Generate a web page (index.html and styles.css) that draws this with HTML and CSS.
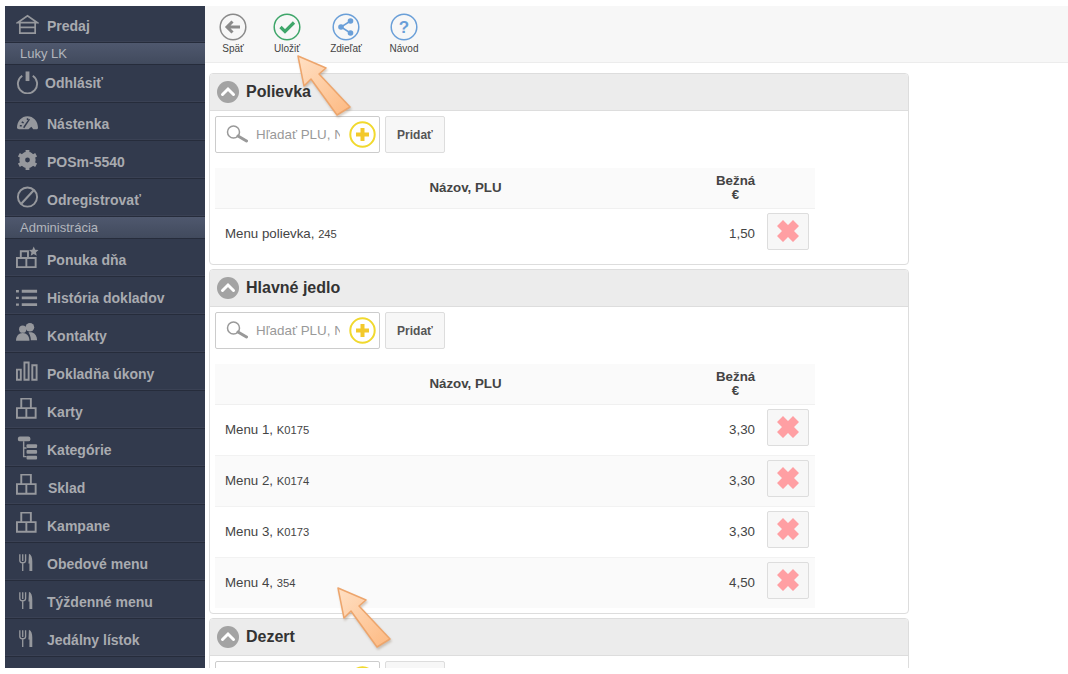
FILE: index.html
```html
<!DOCTYPE html>
<html lang="sk">
<head>
<meta charset="utf-8">
<title>Obedové menu</title>
<link rel="stylesheet" href="styles.css">
</head>
<body>
<svg class="defs" width="0" height="0" aria-hidden="true">
  <defs>
    <symbol id="i-blocks" viewBox="0 0 24 24"><path d="M5.500 0h10v10h-10zM1 10h9.800v10H1zM10.800 10h9.700v10h-9.700z" fill="none" stroke="currentColor" stroke-width="2"/></symbol>
    <symbol id="i-fork" viewBox="0 0 24 24"><path d="M4 4v7M7 4v7M10 4v7M4 10.500c0 2 1.500 2.500 3 2.500s3-.5 3-2.500M7 12v9.500" fill="none" stroke="currentColor" stroke-width="1.400"/><path d="M13.500 3.500c2.500 1 3.500 4 3.500 8v10h-3v-8h-1z" fill="currentColor"/></symbol>
    <symbol id="i-x" viewBox="0 0 24 24"><path d="M7 1 12 6l5-5 6 6-5 5 5 5-6 6-5-5-5 5-6-6 5-5-5-5z" fill="#ff9fa3"/></symbol>
    <symbol id="i-search" viewBox="0 0 22 18"><circle cx="7.500" cy="7" r="6" fill="none" stroke="#999" stroke-width="1.500"/><path d="M12 11 20.500 16" stroke="#999" stroke-width="3" stroke-linecap="round"/></symbol>
    <symbol id="i-plus" viewBox="0 0 27 27"><circle cx="13.500" cy="13.500" r="12.200" fill="#fff" stroke="#f1d92e" stroke-width="2"/><path d="M13.500 7v13M7 13.500h13" stroke="#f3c92b" stroke-width="4"/></symbol>
    <symbol id="i-up" viewBox="0 0 22 22"><circle cx="11" cy="11" r="11" fill="#a3a3a3"/><path d="M5.500 13.500 11 8l5.500 5.500" fill="none" stroke="#fff" stroke-width="3" stroke-linecap="round"/></symbol>
    <linearGradient id="arrow-fill" x1="0" y1="0" x2="1" y2="1">
      <stop offset="0" stop-color="#ffe0c4"/>
      <stop offset="1" stop-color="#fdb981"/>
    </linearGradient>
    <symbol id="callout-arrow" viewBox="0 0 60 64"><path d="M1 1 29 13l-7 6 31 33-13 8L14 24l-7 7z" fill="url(#arrow-fill)" stroke="#eda56c" stroke-width="1.500" stroke-linejoin="round"/></symbol>
  </defs>
</svg>

<div class="frame">
  <nav class="sidebar">
    <a class="nav-item nav-first" href="#"><svg class="nav-icon" viewBox="0 0 24 24"><path d="M2 10.500 12 3.500l10 7zM4 10.500v11h16v-11M4 15.500h16" fill="none" stroke="currentColor" stroke-width="1.800"/></svg><span>Predaj</span></a>
    <div class="nav-group">Luky LK</div>
    <a class="nav-item nav-tight" href="#"><svg class="nav-icon" viewBox="0 0 24 24"><path d="M6.500 5.500a10 10 0 1 0 11 0" fill="none" stroke="currentColor" stroke-width="2"/><path d="M12 1v10" stroke="currentColor" stroke-width="4"/></svg><span>Odhlásiť</span></a>
    <a class="nav-item" href="#"><svg class="nav-icon" viewBox="0 0 24 24"><path d="M1 18.500C1 11 6 6 12 6s11 5 11 12.500l-1 1h-4L16 17l-3 2.500H3z" fill="currentColor"/><path d="M8 18 14 9" stroke="#323a4d" stroke-width="1.500"/><path d="M6 12l2 1M12 8v2M4 16h2" stroke="#323a4d" stroke-width="1.500"/></svg><span>Nástenka</span></a>
    <a class="nav-item" href="#"><svg class="nav-icon" viewBox="0 0 24 24"><path d="M12 6.500a5.500 5.500 0 1 1 0 11 5.500 5.500 0 0 1 0-11z" fill="none" stroke="currentColor" stroke-width="6"/><path d="M12 1.500v4M12 18.500v4M3 6.500l3.500 2M17.500 15.500l3.500 2M3 17.500l3.500-2M17.500 8.500l3.500-2" stroke="currentColor" stroke-width="4"/></svg><span>POSm-5540</span></a>
    <a class="nav-item" href="#"><svg class="nav-icon" viewBox="0 0 24 24"><circle cx="12" cy="11" r="10" fill="none" stroke="currentColor" stroke-width="2"/><path d="M5.500 18 18.500 4" stroke="currentColor" stroke-width="2.200"/></svg><span>Odregistrovať</span></a>
    <div class="nav-group">Administrácia</div>
    <a class="nav-item" href="#"><svg class="nav-icon" viewBox="0 0 24 24"><path d="M5 5h7.500v7H5zM1 12h9.800v9.500H1zM10.800 12h9.700v9.500h-9.700z" fill="none" stroke="currentColor" stroke-width="2"/><path d="m18.500 0 1.500 3.300 3.500.4-2.600 2.400.7 3.500-3.100-1.700-3.100 1.700.7-3.500-2.600-2.400 3.500-.4z" fill="currentColor"/></svg><span>Ponuka dňa</span></a>
    <a class="nav-item" href="#"><svg class="nav-icon" viewBox="0 0 24 24"><path d="M0 7h3M0 14h3M0 21h3" stroke="currentColor" stroke-width="2.500"/><path d="M6 7h16M6 14h16M6 21h16" stroke="currentColor" stroke-width="3"/></svg><span>História dokladov</span></a>
    <a class="nav-item" href="#"><svg class="nav-icon" viewBox="0 0 24 24"><circle cx="14.500" cy="5" r="4.500" fill="currentColor"/><circle cx="7" cy="7" r="3.800" fill="currentColor"/><path d="M0 19c0-5 3-8 7-8s7 3 7 8z" fill="currentColor"/><path d="M13 10.500c1-.5 3-.5 4 0 3 1 5 4 5 8h-6.500c0-3-1-6-2.500-8z" fill="currentColor"/></svg><span>Kontakty</span></a>
    <a class="nav-item" href="#"><svg class="nav-icon" viewBox="0 0 24 24"><path d="M1 9.500h4v10.500H1zM8.800 2h4.400v18H8.800zM17 5h4.500v15H17z" fill="none" stroke="currentColor" stroke-width="2"/></svg><span>Pokladňa úkony</span></a>
    <a class="nav-item" href="#"><svg class="nav-icon"><use href="#i-blocks"/></svg><span>Karty</span></a>
    <a class="nav-item" href="#"><svg class="nav-icon" viewBox="0 0 24 24"><rect x="2" y="0" width="13" height="5" rx="2" fill="currentColor"/><path d="M8 5v16h3M8 12h3" fill="none" stroke="currentColor" stroke-width="1.500"/><rect x="11" y="8" width="11" height="4" rx="1" fill="currentColor"/><rect x="11" y="14" width="11" height="4" rx="1" fill="currentColor"/><rect x="11" y="20" width="11" height="4" rx="1" fill="currentColor"/></svg><span>Kategórie</span></a>
    <a class="nav-item nav-wide" href="#"><svg class="nav-icon"><use href="#i-blocks"/></svg><span>Sklad</span></a>
    <a class="nav-item" href="#"><svg class="nav-icon"><use href="#i-blocks"/></svg><span>Kampane</span></a>
    <a class="nav-item" href="#"><svg class="nav-icon"><use href="#i-fork"/></svg><span>Obedové menu</span></a>
    <a class="nav-item" href="#"><svg class="nav-icon"><use href="#i-fork"/></svg><span>Týždenné menu</span></a>
    <a class="nav-item" href="#"><svg class="nav-icon"><use href="#i-fork"/></svg><span>Jedálny lístok</span></a>
  </nav>

  <main class="main">
    <header class="toolbar">
      <a class="tool" href="#"><svg class="tool-icon" viewBox="0 0 28 28"><circle cx="14" cy="14" r="12.800" fill="none" stroke="#8a8a8a" stroke-width="1.500"/><path d="M21 14H9M13.500 8.500 8 14l5.500 5.500" fill="none" stroke="#8a8a8a" stroke-width="3"/></svg><span>Späť</span></a>
      <a class="tool tool-save" href="#"><svg class="tool-icon" viewBox="0 0 28 28"><circle cx="14" cy="14" r="12.800" fill="none" stroke="#3fa66a" stroke-width="1.500"/><path d="m7.500 14 4.500 4.500L21 9.500" fill="none" stroke="#3fa66a" stroke-width="3.200"/></svg><span>Uložiť</span></a>
      <a class="tool tool-share" href="#"><svg class="tool-icon" viewBox="0 0 28 28"><circle cx="14" cy="14" r="12.800" fill="none" stroke="#6a9fd8" stroke-width="1.500"/><path d="M18.500 8 9 14l9.500 6" fill="none" stroke="#6a9fd8" stroke-width="1.500"/><circle cx="18.500" cy="8" r="2.800" fill="#6a9fd8"/><circle cx="9" cy="14" r="2.800" fill="#6a9fd8"/><circle cx="18.500" cy="20" r="2.800" fill="#6a9fd8"/></svg><span>Zdieľať</span></a>
      <a class="tool tool-help" href="#"><svg class="tool-icon" viewBox="0 0 28 28"><circle cx="14" cy="14" r="12.800" fill="none" stroke="#6a9fd8" stroke-width="1.500"/><text class="help-mark" x="14" y="20" text-anchor="middle">?</text></svg><span>Návod</span></a>
    </header>

    <section class="panel">
      <h2 class="panel-head"><svg class="panel-toggle"><use href="#i-up"/></svg>Polievka</h2>
      <div class="panel-body">
        <div class="search-row">
          <div class="search"><svg class="search-icon"><use href="#i-search"/></svg><span class="search-input">Hľadať PLU, N</span><svg class="search-plus"><use href="#i-plus"/></svg></div>
          <button class="add-btn" type="button">Pridať</button>
        </div>
        <table class="items">
          <thead><tr><th class="col-name">Názov, PLU</th><th class="col-price">Bežná<br>€</th><th class="col-del"></th></tr></thead>
          <tbody>
            <tr><td class="col-name">Menu polievka, <small>245</small></td><td class="col-price">1,50</td><td class="col-del"><button class="del-btn" type="button"><svg><use href="#i-x"/></svg></button></td></tr>
          </tbody>
        </table>
      </div>
    </section>

    <section class="panel">
      <h2 class="panel-head"><svg class="panel-toggle"><use href="#i-up"/></svg>Hlavné jedlo</h2>
      <div class="panel-body">
        <div class="search-row">
          <div class="search"><svg class="search-icon"><use href="#i-search"/></svg><span class="search-input">Hľadať PLU, N</span><svg class="search-plus"><use href="#i-plus"/></svg></div>
          <button class="add-btn" type="button">Pridať</button>
        </div>
        <table class="items">
          <thead><tr><th class="col-name">Názov, PLU</th><th class="col-price">Bežná<br>€</th><th class="col-del"></th></tr></thead>
          <tbody>
            <tr><td class="col-name">Menu 1, <small>K0175</small></td><td class="col-price">3,30</td><td class="col-del"><button class="del-btn" type="button"><svg><use href="#i-x"/></svg></button></td></tr>
            <tr><td class="col-name">Menu 2, <small>K0174</small></td><td class="col-price">3,30</td><td class="col-del"><button class="del-btn" type="button"><svg><use href="#i-x"/></svg></button></td></tr>
            <tr><td class="col-name">Menu 3, <small>K0173</small></td><td class="col-price">3,30</td><td class="col-del"><button class="del-btn" type="button"><svg><use href="#i-x"/></svg></button></td></tr>
            <tr><td class="col-name">Menu 4, <small>354</small></td><td class="col-price">4,50</td><td class="col-del"><button class="del-btn" type="button"><svg><use href="#i-x"/></svg></button></td></tr>
          </tbody>
        </table>
      </div>
    </section>

    <section class="panel">
      <h2 class="panel-head"><svg class="panel-toggle"><use href="#i-up"/></svg>Dezert</h2>
      <div class="panel-body">
        <div class="search-row">
          <div class="search"><svg class="search-icon"><use href="#i-search"/></svg><span class="search-input">Hľadať PLU, N</span><svg class="search-plus"><use href="#i-plus"/></svg></div>
          <button class="add-btn" type="button">Pridať</button>
        </div>
      </div>
    </section>

    <svg class="callout callout-save"><use href="#callout-arrow"/></svg>
    <svg class="callout callout-item"><use href="#callout-arrow"/></svg>
  </main>
</div>
</body>
</html>
```

FILE: styles.css
```css
* { box-sizing: border-box; }
html, body { margin: 0; height: 100%; background: #fff; overflow: hidden; }
body { font-family: "Liberation Sans", Arial, sans-serif; color: #333; padding: 6px 0 0 5px; }
a { text-decoration: none; color: inherit; }
.defs { position: absolute; }

.frame { display: flex; height: 662px; overflow: hidden; }

.sidebar { width: 200px; flex: none; background: #323a4d; }
.nav-item {
  display: flex; align-items: center; gap: 8px; height: 38px; padding: 0 0 0 11px;
  color: #a9abb0; font-size: 14px; font-weight: 700;
  border-bottom: 1px solid #262c3b; box-shadow: inset 0 -1px 0 #3a4154;
}
.nav-item span { padding-top: 4px; }
.nav-first { height: 37px; }
.nav-first span { padding-top: 3px; }
.nav-tight { gap: 6px; }
.nav-tight span { padding: 0 0 2px; }
.nav-tight .nav-icon { margin-bottom: 4px; }
.nav-wide { gap: 9px; }
.nav-icon { width: 23px; height: 24px; flex: none; color: #96989d; }
.nav-group {
  height: 22px; padding: 3px 0 0 15px; font-size: 13px; line-height: 16px; color: #b2b5bc;
  background: linear-gradient(#4f586e, #414a5d); border-bottom: 1px solid #262c3b;
}

.main { position: relative; flex: 1; min-width: 0; background: #fff; }

.toolbar {
  display: flex; height: 57px; padding: 7px 0 0 14px; background: #f7f7f7;
  border-bottom: 1px solid #ececec;
}
.tool { display: flex; flex-direction: column; align-items: center; width: 28px; font-size: 10px; color: #444; }
.tool span { margin-top: 2px; line-height: 12px; white-space: nowrap; }
.tool-icon { width: 28px; height: 28px; flex: none; }
.tool-save { margin-left: 26px; }
.tool-share { margin-left: 31px; }
.tool-help { margin-left: 30px; }
.help-mark { font: 700 17px "Liberation Sans", Arial, sans-serif; fill: #6a9fd8; }

.panel { width: 700px; margin: 4px 0 0 4px; background: #fff; border: 1px solid #ddd; border-radius: 4px; }
.toolbar + .panel { margin-top: 10px; }
.panel-head {
  display: flex; align-items: center; gap: 7px; height: 37px; margin: 0; padding: 0 0 0 7px;
  font-size: 16px; font-weight: 700; color: #333; background: #ececec; border-bottom: 1px solid #ddd;
  border-radius: 3px 3px 0 0;
}
.panel-toggle { width: 22px; height: 22px; }
.panel-body { padding: 5px; }

.search-row { display: flex; gap: 5px; height: 37px; }
.search {
  display: flex; align-items: center; width: 165px; padding: 0 3px 0 10px;
  border: 1px solid #ccc; border-radius: 2px; background: #fff;
}
.search-icon { width: 22px; height: 18px; flex: none; margin-bottom: 2px; }
.search-input { flex: none; width: 84px; margin-left: 8px; overflow: hidden; white-space: nowrap; font-size: 13.4px; color: #999; }
.search-plus { width: 27px; height: 27px; flex: none; margin-left: 9px; }
.add-btn {
  width: 60px; padding: 0; font: 700 12px "Liberation Sans", Arial, sans-serif; color: #555;
  background: #f7f7f7; border: 1px solid #ddd; border-radius: 2px;
}

.items { width: 600px; margin-top: 15px; border-collapse: collapse; table-layout: fixed; font-size: 13.3px; color: #444; }
.items th { height: 40px; padding: 0; font-size: 13.3px; font-weight: 700; line-height: 14px; background: #fafafa; border-bottom: 1px solid #f0f0f0; }
.items td { height: 51px; padding: 4px 0 5px; border-bottom: 1px solid #f2f2f2; }
.items td.col-del { vertical-align: top; }
.items tbody tr:nth-child(even) { background: #fafafa; }
.items tbody tr:last-child td { border-bottom: 0; }
.items small { font-size: 11.2px; }
.col-name { width: 501px; }
td.col-name { padding-left: 10px !important; }
.col-price { width: 49px; }
td.col-price { text-align: right; padding-right: 10px !important; }
th.col-price { padding-right: 10px; }
.col-del { width: 50px; }
.del-btn {
  display: flex; align-items: center; justify-content: center; width: 42px; height: 37px; margin-left: 2px; padding: 0;
  background: #f7f7f7; border: 1px solid #ddd; border-radius: 2px;
}
.del-btn svg { width: 24px; height: 24px; }

.callout { position: absolute; width: 60px; height: 64px; filter: drop-shadow(1px 2px 1px rgba(120, 90, 60, .3)); }
.callout-save { left: 92px; top: 49px; }
.callout-item { left: 132px; top: 581px; }
```
